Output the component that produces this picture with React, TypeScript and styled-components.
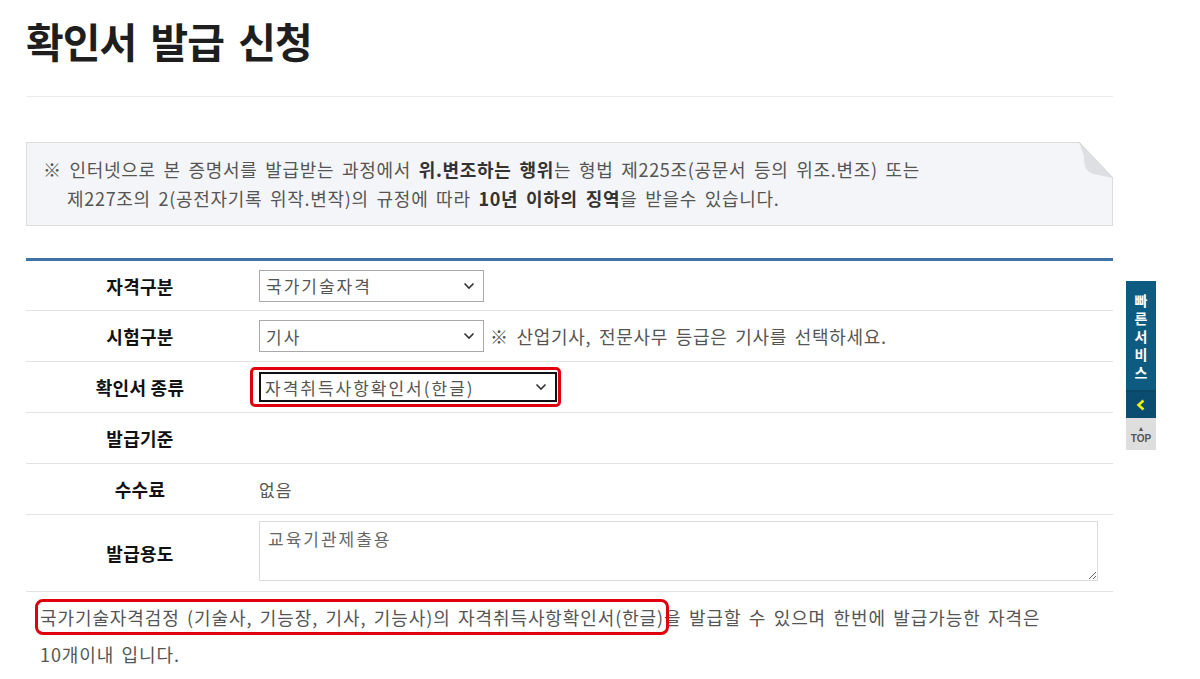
import styled, { createGlobalStyle } from "styled-components";

const GlobalStyle = createGlobalStyle`
  html, body {
    margin: 0;
    padding: 0;
    background: #fff;
  }
  body {
    font-family: "Noto Sans CJK KR", "Noto Sans", "Liberation Sans", sans-serif;
    color: #555;
  }
`;

const Page = styled.div`
  width: 1087px;
  padding: 0 0 0 26px;
`;

const Title = styled.h1`
  margin: 0;
  padding: 16px 0 0;
  height: 97px;
  box-sizing: border-box;
  font-size: 41px;
  font-weight: 700;
  letter-spacing: -1px;
  word-spacing: 6px;
  line-height: 48px;
  color: #1e1e1e;
  border-bottom: 1px solid #ebebeb;
`;

const Notice = styled.div`
  position: relative;
  margin-top: 45px;
  height: 84px;
  box-sizing: border-box;
  padding: 12px 16px 12px 40px;
  background: #f4f5f8;
  border: 1px solid #dcdcdc;
  font-size: 18px;
  letter-spacing: 0.7px;
  word-spacing: 3px;
  line-height: 29px;
  color: #555;
  p {
    margin: 0;
    text-indent: -24px;
  }
  b {
    color: #333;
    font-weight: 700;
  }
`;

const DogEar = styled.svg`
  position: absolute;
  top: -1px;
  right: -1px;
`;

const FormTable = styled.table`
  margin-top: 32px;
  width: 100%;
  border-collapse: collapse;
  border-top: 3px solid #3f72a8;
`;

const Row = styled.tr<{ tall?: boolean }>`
  height: ${(p) => (p.tall ? "76px" : "51px")};
  border-bottom: 1px solid #e3e3e3;
`;

const Label = styled.th`
  width: 228px;
  padding: 0;
  text-align: center;
  font-size: 18px;
  font-weight: 700;
  letter-spacing: 0.3px;
  color: #111;
`;

const Cell = styled.td`
  padding: 0 0 0 5px;
  font-size: 17px;
  letter-spacing: 1px;
  color: #555;
  vertical-align: middle;
`;

const Inline = styled.div`
  display: flex;
  align-items: center;
  gap: 6px;
`;

const Highlight = styled.div`
  display: inline-flex;
  margin-left: -9px;
  padding: 2px 1px 2px 6px;
  border: 3px solid #e0000d;
  border-radius: 5px;
`;

const SelectWrap = styled.div<{ w: number; focused?: boolean }>`
  position: relative;
  width: ${(p) => p.w}px;
  height: ${(p) => (p.focused ? 30 : 32)}px;
  box-sizing: border-box;
  border: ${(p) => (p.focused ? "2px solid #111" : "1px solid #a9a9a9")};
  background: #fff;
  select {
    appearance: none;
    width: 100%;
    height: 100%;
    border: none;
    background: transparent;
    padding: 0 0 0 ${(p) => (p.focused ? 4 : 6)}px;
    font-family: inherit;
    font-size: 17px;
    letter-spacing: 2px;
    color: #555;
    outline: none;
  }
  svg {
    position: absolute;
    right: 8px;
    top: 50%;
    transform: translateY(-50%);
    pointer-events: none;
  }
`;

const Hint = styled.span`
  font-size: 18px;
  letter-spacing: 0.7px;
  word-spacing: 3px;
  color: #555;
`;

const Memo = styled.textarea`
  display: block;
  width: 839px;
  height: 60px;
  box-sizing: border-box;
  margin: 6px 0 10px;
  padding: 4px 8px;
  border: 1px solid #dcdcdc;
  font-family: inherit;
  font-size: 17px;
  letter-spacing: 2px;
  color: #666;
  resize: vertical;
`;

const Guide = styled.p`
  margin: 7px 0 0;
  padding-left: 14px;
  font-size: 18px;
  line-height: 37px;
  color: #555;
  letter-spacing: 0.9px;
  word-spacing: 2.5px;
`;

const Mark = styled.span`
  outline: 3px solid #e0000d;
  outline-offset: 2px;
  border-radius: 3px;
`;

const QuickBar = styled.div`
  position: fixed;
  left: 1126px;
  top: 281px;
  width: 30px;
  display: flex;
  flex-direction: column;
`;

const QuickTitle = styled.div`
  background: #0d5b81;
  color: #fff;
  font-size: 14px;
  font-weight: 700;
  line-height: 18px;
  text-align: center;
  padding: 10px 0 9px;
  border-bottom: 2px solid #0a4766;
  span {
    display: block;
  }
`;

const QuickFold = styled.div`
  height: 26px;
  background: #0a4d70;
  display: flex;
  align-items: center;
  justify-content: center;
`;

const TopBtn = styled.div`
  height: 32px;
  background: #dedede;
  color: #555;
  font-family: "Liberation Sans", sans-serif;
  font-size: 10px;
  font-weight: 700;
  display: flex;
  flex-direction: column;
  align-items: center;
  justify-content: center;
  line-height: 10px;
  small {
    font-size: 7px;
  }
`;

const Chevron = () => (
  <svg width="12" height="8" viewBox="0 0 12 8">
    <path d="M1.5 1.5 L6 6 L10.5 1.5" fill="none" stroke="#333" strokeWidth="1.6" />
  </svg>
);

function Select({ w, value, focused }: { w: number; value: string; focused?: boolean }) {
  return (
    <SelectWrap w={w} focused={focused}>
      <select defaultValue={value}>
        <option>{value}</option>
      </select>
      <Chevron />
    </SelectWrap>
  );
}

export default function App() {
  return (
    <>
      <GlobalStyle />
      <Page>
        <Title>확인서 발급 신청</Title>

        <Notice>
          <p>
            ※ 인터넷으로 본 증명서를 발급받는 과정에서 <b>위.변조하는 행위</b>는 형법 제225조(공문서 등의 위조.변조) 또는
            <br />
            제227조의 2(공전자기록 위작.변작)의 규정에 따라 <b>10년 이하의 징역</b>을 받을수 있습니다.
          </p>
          <DogEar width="34" height="36" viewBox="0 0 34 36">
            <polygon points="0,0 34,0 34,36" fill="#fff" />
            <path d="M0 0 L34 36 L14 32 Q4 28 5 14 Z" fill="#dedfe2" />
            <path d="M0 0 L34 36" stroke="#d4d5d8" strokeWidth="1" fill="none" />
          </DogEar>
        </Notice>

        <FormTable>
          <tbody>
            <Row>
              <Label>자격구분</Label>
              <Cell>
                <Select w={225} value="국가기술자격" />
              </Cell>
            </Row>
            <Row>
              <Label>시험구분</Label>
              <Cell>
                <Inline>
                  <Select w={225} value="기사" />
                  <Hint>※ 산업기사, 전문사무 등급은 기사를 선택하세요.</Hint>
                </Inline>
              </Cell>
            </Row>
            <Row>
              <Label>확인서 종류</Label>
              <Cell>
                <Highlight>
                  <Select w={298} value="자격취득사항확인서(한글)" focused />
                </Highlight>
              </Cell>
            </Row>
            <Row>
              <Label>발급기준</Label>
              <Cell />
            </Row>
            <Row>
              <Label>수수료</Label>
              <Cell>없음</Cell>
            </Row>
            <Row tall>
              <Label>발급용도</Label>
              <Cell>
                <Memo defaultValue="교육기관제출용" />
              </Cell>
            </Row>
          </tbody>
        </FormTable>

        <Guide>
          <Mark>국가기술자격검정 (기술사, 기능장, 기사, 기능사)의 자격취득사항확인서(한글)</Mark>을 발급할 수 있으며 한번에
          발급가능한 자격은
          <br />
          10개이내 입니다.
        </Guide>
      </Page>

      <QuickBar>
        <QuickTitle>
          <span>빠</span>
          <span>른</span>
          <span>서</span>
          <span>비</span>
          <span>스</span>
        </QuickTitle>
        <QuickFold>
          <svg width="10" height="12" viewBox="0 0 10 12">
            <path d="M7.5 1.5 L2.5 6 L7.5 10.5" fill="none" stroke="#f2f200" strokeWidth="2.6" />
          </svg>
        </QuickFold>
        <TopBtn>
          <small>▲</small>
          TOP
        </TopBtn>
      </QuickBar>
    </>
  );
}
